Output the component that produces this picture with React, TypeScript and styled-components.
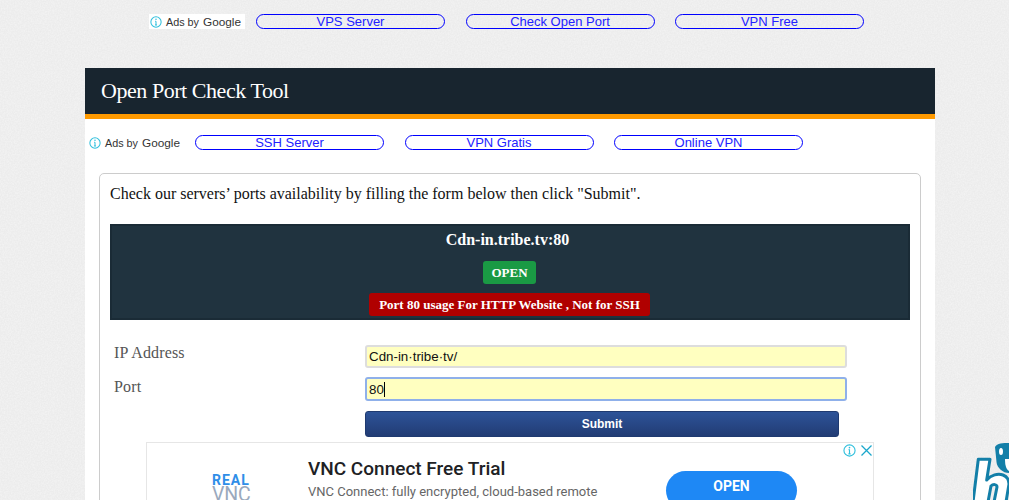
import React from 'react';
import styled, { createGlobalStyle } from 'styled-components';

const noise = `url("data:image/svg+xml,%3Csvg xmlns='http://www.w3.org/2000/svg' width='200' height='200'%3E%3Cfilter id='n'%3E%3CfeTurbulence type='fractalNoise' baseFrequency='0.7' numOctaves='2' stitchTiles='stitch'/%3E%3CfeColorMatrix values='0 0 0 0 0.5 0 0 0 0 0.5 0 0 0 0 0.5 0 0 0 0.2 0'/%3E%3C/filter%3E%3Crect width='200' height='200' filter='url(%23n)'/%3E%3C/svg%3E")`;

const GlobalStyle = createGlobalStyle`
  html, body {
    margin: 0;
    height: 500px;
    overflow: hidden;
  }
  body {
    background-color: #f4f4f4;
    background-image: ${noise};
    font-family: "Liberation Serif", serif;
  }
`;

const Page = styled.div`
  position: relative;
  height: 500px;
  overflow: hidden;
`;

const TopAds = styled.div`
  display: flex;
  align-items: center;
  height: 68px;
  padding: 0 0 25px 149px;
  box-sizing: border-box;
`;

const Wrapper = styled.div`
  width: 850px;
  height: 432px;
  margin-left: 85px;
  background: #fff;
  overflow: hidden;
`;

const Header = styled.h1`
  height: 46px;
  margin: 0;
  padding-left: 16px;
  background: #18252f;
  border-bottom: 5px solid #ff9a00;
  color: #fff;
  font-size: 22px;
  font-weight: 400;
  line-height: 45px;
  letter-spacing: -0.45px;
`;

const InnerAds = styled.div`
  display: flex;
  align-items: center;
  height: 15px;
  margin: 16px 0 23px 4px;
`;

const AdsBy = styled.div<{ $white?: boolean; $width: number }>`
  display: flex;
  align-items: center;
  gap: 4px;
  flex: none;
  width: ${(props) => props.$width}px;
  height: 15px;
  margin-right: ${(props) => (props.$white ? 11 : 0)}px;
  padding-left: ${(props) => (props.$white ? 1 : 0)}px;
  box-sizing: border-box;
  background: ${(props) => (props.$white ? '#fff' : 'transparent')};
  font-family: "Liberation Sans", sans-serif;
  font-size: 10.8px;
  color: #333;
  white-space: nowrap;
`;

const GoogleWord = styled.span`
  font-size: 11.8px;
`;

const AdLink = styled.a`
  display: block;
  flex: none;
  width: 189px;
  height: 15px;
  box-sizing: border-box;
  margin-right: 20.5px;
  border: 1px solid #0000ff;
  border-radius: 8px;
  color: #2222ff;
  font-family: "Liberation Sans", sans-serif;
  font-size: 13px;
  line-height: 13px;
  text-align: center;
`;

const Card = styled.div`
  width: 822px;
  height: 340px;
  margin-left: 14px;
  padding: 10px 10px 0;
  box-sizing: border-box;
  border: 1px solid #ccc;
  border-radius: 5px;
`;

const Intro = styled.p`
  margin: 0 0 20px;
  color: #111;
  font-size: 16px;
  line-height: 20px;
`;

const ResultBox = styled.div`
  display: flex;
  flex-direction: column;
  align-items: center;
  width: 800px;
  height: 96px;
  padding-right: 1px;
  box-sizing: border-box;
  background: #20333f;
  border: 2px solid #1a2b36;
  color: #fff;
  font-weight: 700;
`;

const ResultTitle = styled.div`
  margin: 4px 4px 0 0;
  font-size: 16px;
  line-height: 20px;
`;

const Badge = styled.div<{ $color: string; $top: number; $pad: number }>`
  margin-top: ${(props) => props.$top}px;
  height: 23px;
  padding: 0 ${(props) => props.$pad}px;
  border-radius: 3px;
  background: ${(props) => props.$color};
  font-size: 13px;
  line-height: 23px;
  white-space: nowrap;
`;

const FormGrid = styled.div`
  display: grid;
  grid-template-columns: 251px 482px;
  grid-auto-rows: min-content;
  margin: 25px 0 0 4px;
`;

const Label = styled.label<{ $gap: number; $line: number }>`
  height: 24px;
  margin-bottom: ${(props) => props.$gap}px;
  color: #555;
  font-size: 16px;
  line-height: ${(props) => props.$line}px;
  letter-spacing: 0.15px;
`;

const Field = styled.div<{ $gap: number }>`
  position: relative;
  margin-bottom: ${(props) => props.$gap}px;
`;

const TextInput = styled.input<{ $focus?: boolean }>`
  display: block;
  width: 482px;
  height: ${(props) => (props.$focus ? 24 : 23)}px;
  box-sizing: border-box;
  padding: 0 2px;
  background: #ffffc0;
  border: ${(props) => (props.$focus ? '2px solid #8fb0ea' : '2px solid #ddd')};
  border-radius: 3px;
  outline: none;
  color: #111;
  font-family: "Liberation Sans", sans-serif;
  font-size: 13.33px;
`;

const Caret = styled.span`
  position: absolute;
  left: 19px;
  top: 5px;
  width: 1px;
  height: 15px;
  background: #000;
`;

const SubmitButton = styled.button`
  grid-column: 2;
  display: block;
  width: 474px;
  height: 26px;
  padding: 0;
  border: 1px solid #1f3a70;
  border-radius: 3px;
  background: linear-gradient(#2d5398, #223c74);
  color: #fff;
  font-family: "Liberation Sans", sans-serif;
  font-size: 12px;
  font-weight: 700;
`;

const AdBanner = styled.div`
  position: relative;
  display: flex;
  width: 728px;
  height: 90px;
  margin: 5px 0 0 36px;
  box-sizing: border-box;
  border: 1px solid #e6e6e6;
  border-bottom: 0;
  font-family: Roboto, sans-serif;
`;

const LogoCol = styled.div`
  flex: none;
  width: 161px;
  padding: 31px 0 0 65px;
  box-sizing: border-box;
`;

const LogoTop = styled.div`
  color: #2f8ee8;
  font-size: 14px;
  font-weight: 700;
  line-height: 12px;
  letter-spacing: 1px;
`;

const LogoBottom = styled.div`
  color: #9aa9bd;
  font-size: 19.5px;
  font-weight: 400;
  line-height: 18px;
  letter-spacing: -0.2px;
`;

const AdCopy = styled.div`
  flex: none;
  width: 358px;
  padding-top: 15px;
`;

const AdTitle = styled.div`
  color: #202124;
  font-size: 19px;
  font-weight: 500;
  line-height: 22px;
`;

const AdText = styled.div`
  margin-top: 3px;
  color: #666;
  font-size: 13px;
  line-height: 18px;
  white-space: nowrap;
`;

const OpenButton = styled.div`
  flex: none;
  width: 131px;
  height: 39px;
  margin-top: 28px;
  border-radius: 20px;
  background: #1e88f5;
  color: #fff;
  font-size: 14px;
  font-weight: 700;
  line-height: 30px;
  text-align: center;
`;

const AdControls = styled.div`
  position: absolute;
  top: 1px;
  right: 0;
  display: flex;
  gap: 4px;
`;

const CornerLogo = styled.svg`
  position: absolute;
  right: 0;
  bottom: 0;
`;

const InfoIcon = ({ size = 12 }: { size?: number }) => (
  <svg width={size} height={size} viewBox="0 0 14 14" fill="none" style={{ flex: 'none' }}>
    <circle cx="7" cy="7" r="6" stroke="#2fbfdc" strokeWidth="1.2" />
    <path d="M7 6v4.6M5.8 10.6h2.4M6 6h1" stroke="#2fbfdc" strokeWidth="1.2" />
    <circle cx="7" cy="3.9" r="0.9" fill="#2fbfdc" />
  </svg>
);

const CloseIcon = () => (
  <svg width="13" height="13" viewBox="0 0 13 13" fill="none">
    <path d="M1.5 1.5l10 10M11.5 1.5l-10 10" stroke="#1ba7cc" strokeWidth="1.3" />
  </svg>
);

const topLinks = ['VPS Server', 'Check Open Port', 'VPN Free'];
const innerLinks = ['SSH Server', 'VPN Gratis', 'Online VPN'];

export default function App() {
  return (
    <Page>
      <GlobalStyle />
      <TopAds>
        <AdsBy $white $width={96}>
          <InfoIcon />
          <span>Ads by</span>
          <GoogleWord>Google</GoogleWord>
        </AdsBy>
        {topLinks.map((t) => (
          <AdLink key={t}>{t}</AdLink>
        ))}
      </TopAds>
      <Wrapper>
        <Header>Open Port Check Tool</Header>
        <InnerAds>
          <AdsBy $width={106}>
            <InfoIcon />
            <span>Ads by</span>
            <GoogleWord>Google</GoogleWord>
          </AdsBy>
          {innerLinks.map((t) => (
            <AdLink key={t}>{t}</AdLink>
          ))}
        </InnerAds>
        <Card>
          <Intro>Check our servers’ ports availability by filling the form below then click "Submit".</Intro>
          <ResultBox>
            <ResultTitle>Cdn-in.tribe.tv:80</ResultTitle>
            <Badge $color="#1a9a44" $top={11} $pad={8.5}>OPEN</Badge>
            <Badge $color="#b00000" $top={9} $pad={10}>Port 80 usage For HTTP Website , Not for SSH</Badge>
          </ResultBox>
          <FormGrid>
            <Label $gap={8} $line={16}>IP Address</Label>
            <Field $gap={9}>
              <TextInput readOnly value="Cdn-in·tribe·tv/" />
            </Field>
            <Label $gap={10} $line={20}>Port</Label>
            <Field $gap={10}>
              <TextInput $focus readOnly value="80" />
              <Caret />
            </Field>
            <SubmitButton>Submit</SubmitButton>
          </FormGrid>
          <AdBanner>
            <LogoCol>
              <LogoTop>REAL</LogoTop>
              <LogoBottom>VNC</LogoBottom>
            </LogoCol>
            <AdCopy>
              <AdTitle>VNC Connect Free Trial</AdTitle>
              <AdText>VNC Connect: fully encrypted, cloud-based remote</AdText>
            </AdCopy>
            <OpenButton>OPEN</OpenButton>
            <AdControls>
              <InfoIcon size={13} />
              <CloseIcon />
            </AdControls>
          </AdBanner>
        </Card>
      </Wrapper>
      <CornerLogo width="36" height="60" viewBox="0 0 36 60">
        <path
          d="M5.3 19.3H17L13.7 40C18 35 25 33 30 35C34 36.5 36 40 36 44L33 62H21L24 47C24 44 20 44 18 46L15 62H0Z"
          fill="#fff"
          stroke="#137fa8"
          strokeWidth="3"
          strokeLinejoin="round"
        />
        <path d="M22 7C24 3 30 3 36 3V33C30 33 24 28 23.5 22Z" fill="#137fa8" />
        <ellipse cx="28" cy="11.5" rx="2" ry="3.6" fill="#fff" />
        <path d="M32 19H36V31C33 29 32 25 32 19Z" fill="#fff" />
      </CornerLogo>
    </Page>
  );
}
